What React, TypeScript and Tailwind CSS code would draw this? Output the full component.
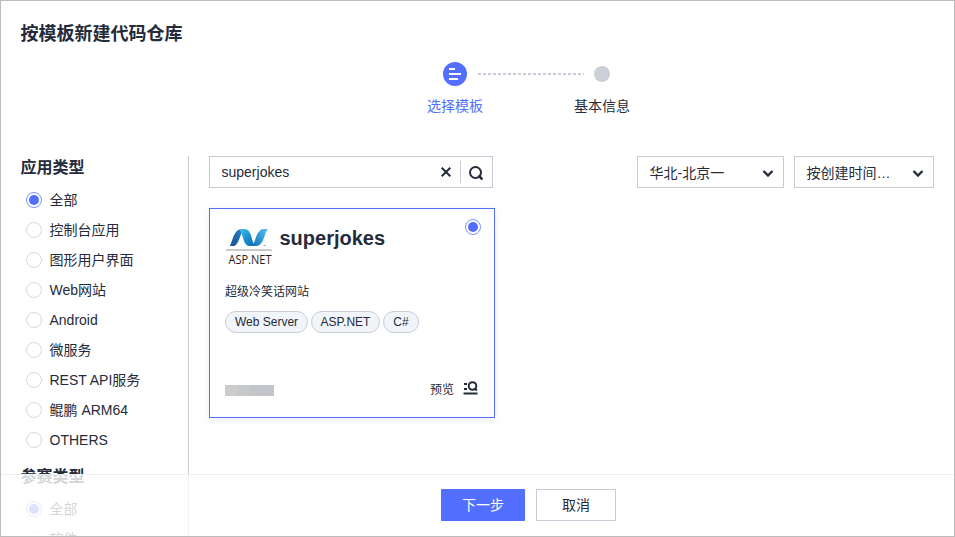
import React from "react";

const categories = ["全部", "控制台应用", "图形用户界面", "Web网站", "Android", "微服务", "REST API服务", "鲲鹏 ARM64", "OTHERS"];
const contests = ["全部", "软件"];

function Radio({ checked }: { checked: boolean }) {
  return (
    <span
      className={`flex size-4 shrink-0 items-center justify-center rounded-full border ${checked ? "border-[#7d93ff]" : "border-[#d5d8e2]"}`}
    >
      {checked && <span className="size-2.5 rounded-full bg-[#526fff]" />}
    </span>
  );
}

function RadioGroup({ title, items }: { title: string; items: string[] }) {
  return (
    <section>
      <h2 className="h-[29px] pl-[19.5px] text-base leading-[23px] font-bold">{title}</h2>
      {items.map((item, i) => (
        <label key={item} className="flex h-[30px] items-center gap-[7.5px] pl-[25px] text-sm whitespace-nowrap">
          <Radio checked={i === 0} />
          {item}
        </label>
      ))}
    </section>
  );
}

function Chevron() {
  return (
    <svg className="mt-px" width="12" height="8" viewBox="0 0 12 8" fill="none" stroke="#252b3a" strokeWidth="2.4">
      <path d="M1.5 2 6 6.500l4.500-4.500" />
    </svg>
  );
}

function Select({ label, width }: { label: string; width: string }) {
  return (
    <div className={`flex h-8 items-center justify-between border border-[#c9ccd7] pr-[9px] pl-[11.5px] text-sm ${width}`}>
      <span className="pt-px">{label}</span>
      <Chevron />
    </div>
  );
}

function Steps() {
  return (
    <div className="flex h-[56px] justify-center pl-[101px] text-sm">
      <div className="flex w-14 flex-col items-center">
        <svg width="24" height="24" viewBox="0 0 24 24">
          <circle cx="12" cy="12" r="12" fill="#526fff" />
          <path d="M6 7h6M6 12h12M6 17h9" stroke="#fff" strokeWidth="2" />
        </svg>
        <span className="mt-[9px] pl-px leading-[22px] whitespace-nowrap text-[#526fff]">选择模板</span>
      </div>
      <svg className="mt-[11px] -mr-[10px] -ml-[5px]" width="106" height="2" viewBox="0 0 106 2">
        <path d="M0 1h106" stroke="#cacdd8" strokeWidth="2" strokeDasharray="3 2" />
      </svg>
      <div className="flex w-14 flex-col items-center">
        <span className="mt-1 size-4 rounded-full bg-[#cacfd8]" />
        <span className="mt-[13px] pl-px leading-[22px] whitespace-nowrap">基本信息</span>
      </div>
    </div>
  );
}

function AspLogo() {
  return (
    <svg width="48" height="42" viewBox="0 0 48 42">
      <defs>
        <linearGradient id="leg" x1="0" y1="1" x2="1" y2="0">
          <stop offset="0" stopColor="#174f94" />
          <stop offset="1" stopColor="#2a86c8" />
        </linearGradient>
        <linearGradient id="band" x1="0" y1="0" x2="1" y2="1">
          <stop offset="0" stopColor="#3fc0ee" />
          <stop offset=".5" stopColor="#1c92d2" />
          <stop offset="1" stopColor="#0f5fa8" />
        </linearGradient>
        <linearGradient id="arm" x1="0" y1="1" x2="1" y2="0">
          <stop offset="0" stopColor="#0e6fb8" />
          <stop offset="1" stopColor="#58c4ee" />
        </linearGradient>
      </defs>
      <path d="M5 21C8 15 9 4 17 4h2c-4 4-5 16-10 17Z" fill="url(#leg)" />
      <path d="M14 5c8-3 11 1 12.500 7 1 4 2 8 5 9h-7c-5 0-6-7-7.500-11-.8-2.500-1.500-4-3-5Z" fill="url(#band)" />
      <path d="M27 21c4-4 4-17 12-17h4c-4 4-4 17-12 17Z" fill="url(#arm)" />
      <path d="M38.500 20.500h2" stroke="#8a9aa5" />
      <path d="M1 25h46" stroke="#b9b9b9" strokeWidth="1.5" />
      <text x="3.500" y="38.500" fontSize="12" textLength="43" lengthAdjust="spacingAndGlyphs" fontFamily="'Open Sans', sans-serif" fill="#1d1d1d">
        ASP.NET
      </text>
    </svg>
  );
}

function TemplateCard() {
  return (
    <article className="flex h-[210px] w-[286px] flex-col border border-[#526fff] px-[15px] shadow-[0_2px_8px_rgba(37,43,58,0.08)]">
      <header className="flex h-[75px] pt-4">
        <AspLogo />
        <h3 className="ml-[6.5px] text-xl leading-[27px] font-bold">superjokes</h3>
        <span className="-mt-[6px] -mr-[2px] ml-auto">
          <Radio checked />
        </span>
      </header>
      <p className="text-xs leading-4">超级冷笑话网站</p>
      <div className="mt-[11px] flex gap-[3px] text-xs">
        <span className="flex h-[22px] w-[83px] items-center justify-center rounded-full border border-[#cacdd8] bg-[#f1f5f9]">Web Server</span>
        <span className="flex h-[22px] w-[69px] items-center justify-center rounded-full border border-[#cacdd8] bg-[#f1f5f9]">ASP.NET</span>
        <span className="flex h-[22px] w-9 items-center justify-center rounded-full border border-[#cacdd8] bg-[#f1f5f9]">C#</span>
      </div>
      <footer className="mt-auto flex h-[37px] items-start justify-between">
        <div className="mt-[5px] flex h-[11px] w-[49px]">
          <span className="w-[13px] bg-[#cccccd]" />
          <span className="w-3 bg-[#c7c8c9]" />
          <span className="w-3 bg-[#c3c5c8]" />
          <span className="flex-1 bg-[#c3c4cc]" />
        </div>
        <div className="flex items-start gap-[9px] text-xs">
          <span className="leading-5">预览</span>
          <svg className="mt-px mr-px" width="15" height="14" viewBox="0 0 15 14" fill="none" stroke="#252b3a" strokeWidth="2">
            <path d="M1 3h3M1 8h3M.5 12.500h14" />
            <circle cx="9.500" cy="5" r="3.800" />
            <path d="m11.500 7 2.300 2.500" />
          </svg>
        </div>
      </footer>
    </article>
  );
}

export default function App() {
  return (
    <div className="relative h-[537px] w-[955px] overflow-hidden border border-[#bcbcbc] bg-white font-['Liberation_Sans','Noto_Sans_CJK_SC',sans-serif] text-[#252b3a]">
      <h1 className="h-[61px] pt-5 pl-[19.5px] text-lg leading-[27px] font-bold">按模板新建代码仓库</h1>
      <Steps />
      <main className="mt-[38px] flex">
        <aside className="h-[400px] w-[188px] shrink-0 border-r border-[#cacdd8]">
          <RadioGroup title="应用类型" items={categories} />
          <div className="mt-[10px]">
            <RadioGroup title="参赛类型" items={contests} />
          </div>
        </aside>
        <div className="flex-1 pr-5 pl-5">
          <div className="flex justify-between">
            <div className="flex h-8 w-[284px] items-center border border-[#c9ccd7] pl-[11.5px] text-sm">
              <span className="flex-1">superjokes</span>
              <svg className="mr-[9px]" width="10" height="10" viewBox="0 0 10 10" stroke="#252b3a" strokeWidth="2">
                <path d="m.7.7 8.6 8.6m0-8.6L.7 9.3" />
              </svg>
              <span className="h-[22px] w-px bg-[#c9ccd7]" />
              <svg className="mt-px mr-[9px] ml-2" width="14" height="14" viewBox="0 0 14 14" fill="none" stroke="#252b3a" strokeWidth="2">
                <circle cx="6.5" cy="6.5" r="5.5" />
                <path d="m9.5 9.5 4 4" strokeWidth="2.5" />
              </svg>
            </div>
            <div className="flex gap-[10px]">
              <Select label="华北-北京一" width="w-[147px]" />
              <Select label="按创建时间…" width="w-[140px]" />
            </div>
          </div>
          <div className="mt-5">
            <TemplateCard />
          </div>
        </div>
      </main>
      <div className="absolute inset-x-0 bottom-0 flex h-[62px] justify-center gap-[11px] border-t border-[#eeeff2] bg-white/80 pt-[14px] pl-[102px] text-sm">
        <button className="h-8 w-[84px] rounded-[1px] bg-[#526fff] text-white">下一步</button>
        <button className="h-8 w-20 border border-[#c9ccd7] bg-white">取消</button>
      </div>
    </div>
  );
}
